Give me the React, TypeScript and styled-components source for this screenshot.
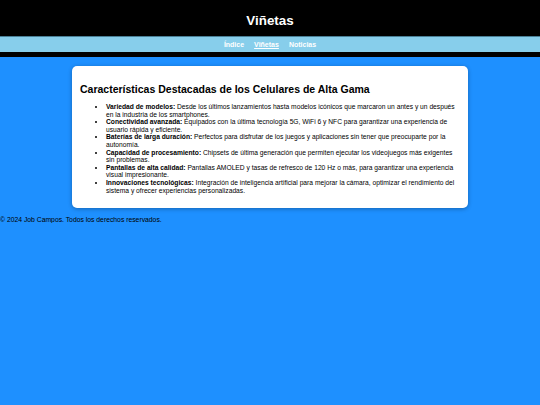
import React from "react"
import styled, { createGlobalStyle } from "styled-components"

const GlobalStyle = createGlobalStyle`
  html, body {
    margin: 0;
    padding: 0;
    background: #1e90ff;
    font-family: "Liberation Sans", Arial, sans-serif;
  }
`

const features = [
  {
    title: "Variedad de modelos:",
    text: "Desde los últimos lanzamientos hasta modelos icónicos que marcaron un antes y un después en la industria de los smartphones.",
  },
  {
    title: "Conectividad avanzada:",
    text: "Equipados con la última tecnología 5G, WiFi 6 y NFC para garantizar una experiencia de usuario rápida y eficiente.",
  },
  {
    title: "Baterías de larga duración:",
    text: "Perfectos para disfrutar de los juegos y aplicaciones sin tener que preocuparte por la autonomía.",
  },
  {
    title: "Capacidad de procesamiento:",
    text: "Chipsets de última generación que permiten ejecutar los videojuegos más exigentes sin problemas.",
  },
  {
    title: "Pantallas de alta calidad:",
    text: "Pantallas AMOLED y tasas de refresco de 120 Hz o más, para garantizar una experiencia visual impresionante.",
  },
  {
    title: "Innovaciones tecnológicas:",
    text: "Integración de inteligencia artificial para mejorar la cámara, optimizar el rendimiento del sistema y ofrecer experiencias personalizadas.",
  },
]

const App = () => {
  return (
    <>
      <GlobalStyle />
      <Header>
        <SiteTitle>Viñetas</SiteTitle>
      </Header>
      <Nav>
        <NavLink href="#">Índice</NavLink>
        <NavLink href="#" $active>
          Viñetas
        </NavLink>
        <NavLink href="#">Noticias</NavLink>
      </Nav>
      <Main>
        <Card>
          <CardTitle>Características Destacadas de los Celulares de Alta Gama</CardTitle>
          <FeatureList>
            {features.map((f) => (
              <FeatureItem key={f.title}>
                <strong>{f.title}</strong> {f.text}
              </FeatureItem>
            ))}
          </FeatureList>
        </Card>
      </Main>
      <Footer>© 2024 Job Campos. Todos los derechos reservados.</Footer>
    </>
  )
}

const Header = styled.header`
  background: #000;
  height: 36px;
  display: flex;
  align-items: center;
  justify-content: center;
`

const SiteTitle = styled.h1`
  margin: 4px 0 0;
  color: #fff;
  font-size: 13.4px;
  font-weight: bold;
`

const Nav = styled.nav`
  background: #87ceeb;
  height: 15px;
  border-top: 1px solid #4a7f95;
  border-bottom: 5px solid #000;
  display: flex;
  align-items: center;
  justify-content: center;
  gap: 10px;
`

const NavLink = styled.a<{ $active?: boolean }>`
  color: #fff;
  font-size: 7px;
  font-weight: bold;
  text-decoration: ${(p) => (p.$active ? "underline" : "none")};
`

const Main = styled.main`
  padding: 9px 72px;
`

const Card = styled.section`
  background: #fff;
  border-radius: 5px;
  box-shadow: 0 1px 4px rgba(0, 0, 0, 0.3);
  padding: 8px 8px 14px;
`

const CardTitle = styled.h2`
  margin: 9px 0 8px;
  font-size: 10.5px;
  font-weight: bold;
  color: #000;
`

const FeatureList = styled.ul`
  margin: 0;
  padding-left: 26px;
  list-style: disc;
`

const FeatureItem = styled.li`
  font-size: 6.7px;
  line-height: 7.6px;
  color: #000;
`

const Footer = styled.footer`
  padding: 0;
  margin-top: -1px;
  font-size: 6.8px;
  color: #000;
`

export default App
